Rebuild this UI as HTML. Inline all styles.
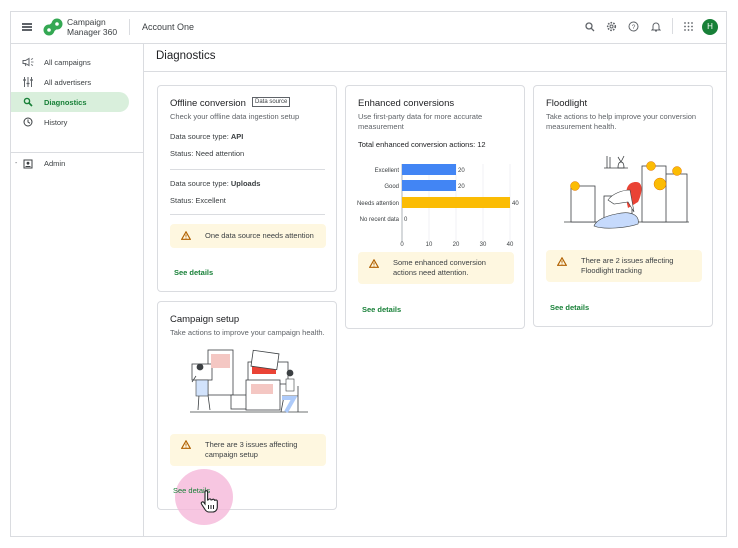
<!DOCTYPE html>
<html><head><style>
*{box-sizing:border-box;margin:0;padding:0}
body{width:738px;height:548px;background:#fff;font-family:"Liberation Sans",sans-serif;color:#3c4043;position:relative;overflow:hidden}
.a{position:absolute}
.frame{left:10px;top:11px;width:717px;height:526px;border:1px solid #dadce0}
.card{position:absolute;border:1px solid #dadce0;border-radius:4px;background:#fff}
.t{font-size:9.5px;color:#202124}
.s{font-size:7.5px;color:#5f6368;line-height:10px}
.b{font-size:7.5px;color:#3c4043}
.warn{position:absolute;background:#fef7e0;border-radius:4px;font-size:7.5px;color:#3c4043;line-height:10px}
.warn svg{position:absolute;left:11px}
.link{position:absolute;font-size:7.5px;color:#188038;font-weight:bold}
.nav{position:absolute;left:44px;font-size:7.5px;color:#3c4043}
</style></head><body>
<div class="a frame"></div>
<div class="a" style="left:11px;top:43px;width:716px;height:1px;background:#dadce0"></div>
<div class="a" style="left:22px;top:23px;width:10px;height:1.5px;background:#5f6368;box-shadow:0 3px 0 #5f6368,0 6px 0 #5f6368"></div>
<svg class="a" style="left:43px;top:17px" width="20" height="20" viewBox="0 0 20 20"><circle cx="6" cy="13" r="5.5" fill="#34a853"/><circle cx="14" cy="7" r="5.5" fill="#34a853"/><rect x="5" y="6" width="10" height="8" fill="#34a853" transform="rotate(-40 10 10)"/><circle cx="6" cy="13" r="1.8" fill="#fff"/><circle cx="14" cy="7" r="1.8" fill="#fff"/></svg>
<div class="a" style="left:67px;top:17px;font-size:8.5px;line-height:10px;color:#3c4043">Campaign<br>Manager 360</div>
<div class="a" style="left:129px;top:19px;width:1px;height:16px;background:#dadce0"></div>
<div class="a" style="left:142px;top:22px;font-size:9px;color:#3c4043">Account One</div>
<svg class="a" style="left:585px;top:22px" width="10" height="10" viewBox="0 0 10 10"><circle cx="4" cy="4" r="3" fill="none" stroke="#5f6368" stroke-width="1.3"/><path d="M6.3 6.3L9 9" stroke="#5f6368" stroke-width="1.3"/></svg>
<svg class="a" style="left:606px;top:21px" width="11" height="11" viewBox="0 0 11 11"><circle cx="5.5" cy="5.5" r="3.8" fill="none" stroke="#5f6368" stroke-width="1.6" stroke-dasharray="1.6 1.2"/><circle cx="5.5" cy="5.5" r="1.5" fill="none" stroke="#5f6368" stroke-width="1"/></svg>
<svg class="a" style="left:628px;top:21px" width="11" height="11" viewBox="0 0 11 11"><circle cx="5.5" cy="5.5" r="4.5" fill="none" stroke="#5f6368" stroke-width="1"/><text x="5.5" y="8" font-size="6.5" text-anchor="middle" fill="#5f6368" font-family="Liberation Sans">?</text></svg>
<svg class="a" style="left:651px;top:21px" width="10" height="11" viewBox="0 0 10 11"><path d="M2 8V5a3 3 0 016 0v3l1 1H1z" fill="none" stroke="#5f6368" stroke-width="1"/><path d="M4 10h2" stroke="#5f6368"/></svg>
<div class="a" style="left:672px;top:18px;width:1px;height:16px;background:#dadce0"></div>
<svg class="a" style="left:684px;top:22px" width="9" height="9" viewBox="0 0 9 9" fill="#5f6368"><circle cx="1" cy="1" r=".9"/><circle cx="4.5" cy="1" r=".9"/><circle cx="8" cy="1" r=".9"/><circle cx="1" cy="4.5" r=".9"/><circle cx="4.5" cy="4.5" r=".9"/><circle cx="8" cy="4.5" r=".9"/><circle cx="1" cy="8" r=".9"/><circle cx="4.5" cy="8" r=".9"/><circle cx="8" cy="8" r=".9"/></svg>
<div class="a" style="left:702px;top:19px;width:16px;height:16px;border-radius:50%;background:#188038;color:#fff;font-size:8px;text-align:center;line-height:16px">H</div>
<!-- sidebar -->
<div class="a" style="left:143px;top:44px;width:1px;height:493px;background:#dadce0"></div>
<div class="a" style="left:11px;top:152px;width:132px;height:1px;background:#dadce0"></div>
<div class="a" style="left:11px;top:92px;width:118px;height:20px;background:#d9efdc;border-radius:0 10px 10px 0"></div>
<svg class="a" style="left:22px;top:57px" width="12" height="10" viewBox="0 0 12 10"><path d="M1 3.5h2.5L7 1.5v7L3.5 6.5H1z" fill="none" stroke="#5f6368" stroke-width="1"/><path d="M3 6.5l.8 2.5" stroke="#5f6368"/><path d="M9 2.5l2-1M9 5h2.5M9 7.5l2 1" stroke="#5f6368" stroke-width=".8"/></svg>
<div class="nav" style="top:58px">All campaigns</div>
<svg class="a" style="left:23px;top:77px" width="10" height="10" viewBox="0 0 10 10" stroke="#5f6368" stroke-width="1"><path d="M1.5 0v10M5 0v10M8.5 0v10"/><path d="M0 3h3M3.5 6.5h3M7 3h3" stroke-width="1.2"/></svg>
<div class="nav" style="top:78px">All advertisers</div>
<svg class="a" style="left:23px;top:97px" width="10" height="10" viewBox="0 0 10 10"><circle cx="4" cy="4" r="2.6" fill="none" stroke="#188038" stroke-width="1.4"/><path d="M6 6l3 3" stroke="#188038" stroke-width="1.6"/></svg>
<div class="nav" style="top:98px;color:#188038;font-weight:bold">Diagnostics</div>
<svg class="a" style="left:23px;top:117px" width="10" height="10" viewBox="0 0 10 10"><circle cx="5" cy="5" r="4" fill="none" stroke="#3c4043" stroke-width="1"/><path d="M5 2.5V5l2 1.3" fill="none" stroke="#3c4043"/></svg>
<div class="nav" style="top:118px">History</div>
<div class="a" style="left:15px;top:160px;font-size:7px;color:#5f6368">-</div>
<svg class="a" style="left:23px;top:159px" width="10" height="10" viewBox="0 0 10 10"><rect x="1" y="1" width="8" height="8" fill="none" stroke="#3c4043"/><circle cx="5" cy="4.2" r="1.4" fill="#3c4043"/><path d="M2.5 7.5h5" stroke="#3c4043"/></svg>
<div class="nav" style="top:159px">Admin</div>
<div class="a" style="left:156px;top:50px;font-size:11.5px;color:#202124">Diagnostics</div>
<div class="a" style="left:144px;top:71px;width:583px;height:1px;background:#dadce0"></div>

<!-- card 1 -->
<div class="card" style="left:157px;top:85px;width:180px;height:207px">
  <div class="a t" style="left:12px;top:12px">Offline conversion</div>
  <div class="a" style="left:94px;top:11px;border:1px solid #5f6368;font-size:6px;padding:1px 2px;color:#3c4043">Data source</div>
  <div class="a s" style="left:12px;top:26px">Check your offline data ingestion setup</div>
  <div class="a b" style="left:12px;top:46px">Data source type: <b>API</b></div>
  <div class="a b" style="left:12px;top:63px">Status: Need attention</div>
  <div class="a" style="left:12px;top:83px;width:155px;height:1px;background:#dadce0"></div>
  <div class="a b" style="left:12px;top:93px">Data source type: <b>Uploads</b></div>
  <div class="a b" style="left:12px;top:110px">Status: Excellent</div>
  <div class="a" style="left:12px;top:128px;width:155px;height:1px;background:#dadce0"></div>
  <div class="warn" style="left:12px;top:138px;width:156px;height:24px"><svg style="top:7px" width="10" height="9" viewBox="0 0 10 9"><path d="M5 .8L9.3 8.3H.7z" fill="none" stroke="#b06000" stroke-width="1.1"/><path d="M5 3.5v2.2M5 6.6v.8" stroke="#b06000"/></svg><span class="a" style="left:35px;top:7px">One data source needs attention</span></div>
  <div class="link" style="left:16px;top:182px">See details</div>
</div>
<!-- card 2 -->
<div class="card" style="left:157px;top:301px;width:180px;height:209px">
  <div class="a t" style="left:12px;top:12px">Campaign setup</div>
  <div class="a s" style="left:12px;top:26px">Take actions to improve your campaign health.</div>
  <svg class="a" style="left:30px;top:44px" width="120" height="80" viewBox="0 0 120 80">
    <g fill="none" stroke="#3c4043" stroke-width=".8">
    <rect x="20" y="4" width="25" height="45" fill="#fff"/><rect x="43" y="49" width="30" height="14" fill="#fff"/>
    <rect x="60" y="16" width="40" height="22" fill="#fff"/><rect x="58" y="34" width="34" height="30" fill="#fff"/>
    <path d="M2 66h118"/><rect x="4" y="18" width="20" height="16" fill="#fff"/>
    <path d="M12 34l-2 30M18 34l4 30M8 30l-4 6" /><circle cx="12" cy="21" r="3" fill="#3c4043"/>
    <path d="M110 40v26M94 50h16M96 50l-3 16" /><circle cx="102" cy="27" r="3" fill="#3c4043"/>
    </g>
    <rect x="23" y="8" width="19" height="14" fill="#f4c7c3"/>
    <rect x="64" y="20" width="24" height="8" fill="#ea4335"/>
    <rect x="63" y="38" width="22" height="10" fill="#f4c7c3"/>
    <rect x="8" y="34" width="12" height="16" fill="#d2e3fc" stroke="#3c4043" stroke-width=".6"/>
    <path d="M94 52h12l-8 14" fill="none" stroke="#aecbfa" stroke-width="4"/>
    <rect x="98" y="33" width="8" height="12" fill="#fff" stroke="#3c4043" stroke-width=".6"/>
    <rect x="64" y="6" width="26" height="16" fill="#fff" stroke="#3c4043" stroke-width=".8" transform="rotate(8 77 14)"/>
  </svg>
  <div class="warn" style="left:12px;top:132px;width:156px;height:32px"><svg style="top:6px" width="10" height="9" viewBox="0 0 10 9"><path d="M5 .8L9.3 8.3H.7z" fill="none" stroke="#b06000" stroke-width="1.1"/><path d="M5 3.5v2.2M5 6.6v.8" stroke="#b06000"/></svg><span class="a" style="left:35px;top:6px">There are 3 issues affecting<br>campaign setup</span></div>
</div>
<div class="a" style="left:175px;top:469px;width:58px;height:56px;border-radius:50%;background:#f5b8da;opacity:.8"></div>
<div class="a" style="left:173px;top:486px;font-size:7.5px;color:#188038">See details</div>
<svg class="a" style="left:200px;top:490px" width="18" height="24" viewBox="0 0 18 24"><path d="M5 2a1.3 1.3 0 012.6 0v8l1-.3a1.3 1.3 0 012.5.3l1-.2a1.3 1.3 0 012.4.5l.8-.1a1.3 1.3 0 012 1.1V17c0 3-2 5-4.5 5H9c-2 0-3-1-4-2.5L1.5 14a1.4 1.4 0 012.2-1.7L5 14z" fill="#fff" stroke="#202124" stroke-width="1.1"/><path d="M8.5 15v4M11 15v4M13.5 15v4" stroke="#202124" stroke-width="1"/></svg>
<!-- card 3 -->
<div class="card" style="left:345px;top:85px;width:180px;height:244px">
  <div class="a t" style="left:12px;top:12px">Enhanced conversions</div>
  <div class="a s" style="left:12px;top:26px">Use first-party data for more accurate<br>measurement</div>
  <div class="a b" style="left:12px;top:54px;color:#202124">Total enhanced conversion actions: 12</div>
  <svg class="a" style="left:0;top:70px" width="180" height="95" viewBox="0 0 180 95" font-family="Liberation Sans" font-size="6" fill="#3c4043">
    <g stroke="#e8eaed" stroke-width=".6"><path d="M83 8v78M110 8v78M137 8v78M164 8v78"/></g>
    <path d="M56 8v78" stroke="#9aa0a6" stroke-width=".8"/>
    <rect x="56" y="8" width="54" height="11" fill="#4285f4"/>
    <rect x="56" y="24" width="54" height="11" fill="#4285f4"/>
    <rect x="56" y="41" width="108" height="11" fill="#fbbc04"/>
    <g text-anchor="end"><text x="53" y="16">Excellent</text><text x="53" y="32">Good</text><text x="53" y="49">Needs attention</text><text x="53" y="65">No recent data</text></g>
    <text x="112" y="16">20</text><text x="112" y="32">20</text><text x="166" y="49">40</text><text x="58" y="65">0</text>
    <g text-anchor="middle"><text x="56" y="90">0</text><text x="83" y="90">10</text><text x="110" y="90">20</text><text x="137" y="90">30</text><text x="164" y="90">40</text></g>
  </svg>
  <div class="warn" style="left:12px;top:166px;width:156px;height:32px"><svg style="top:7px" width="10" height="9" viewBox="0 0 10 9"><path d="M5 .8L9.3 8.3H.7z" fill="none" stroke="#b06000" stroke-width="1.1"/><path d="M5 3.5v2.2M5 6.6v.8" stroke="#b06000"/></svg><span class="a" style="left:35px;top:6px">Some enhanced conversion<br>actions need attention.</span></div>
  <div class="link" style="left:16px;top:219px">See details</div>
</div>
<!-- card 4 -->
<div class="card" style="left:533px;top:85px;width:180px;height:242px">
  <div class="a t" style="left:12px;top:12px">Floodlight</div>
  <div class="a s" style="left:12px;top:26px">Take actions to help improve your conversion<br>measurement health.</div>
  <svg class="a" style="left:20px;top:58px" width="140" height="100" viewBox="0 0 140 100">
    <g fill="none" stroke="#3c4043" stroke-width=".8">
    <path d="M10 78h125"/><rect x="17" y="42" width="24" height="36" fill="#fff"/><rect x="108" y="30" width="25" height="48" fill="#fff"/><rect x="88" y="22" width="24" height="56" fill="#fff"/>
    <rect x="50" y="52" width="28" height="26" fill="#fff"/><path d="M50 24h24M53 12v12M56 13v11"/>
    <path d="M64 24c0-4 1-6 3-6s3 2 3 6z"/><path d="M67 18l-3-5M67 18l3-6"/>
    </g>
    <path d="M82 38c-10 0-12 10-8 26l10 -6c4-8 6-20-2-20z" fill="#ea4335"/>
    <path d="M76 46c-8 0-18 4-22 10l6 4 14-2 6 10z" fill="#fff" stroke="#3c4043" stroke-width=".6"/>
    <path d="M62 70c-10 2-20 6-22 12 10 4 32 2 44 -2 2-8-6-14-22-10z" fill="#c6dafc" stroke="#3c4043" stroke-width=".6"/>
    <g fill="#fbbc04" stroke="#e37400" stroke-width=".5"><circle cx="21" cy="42" r="4.5"/><circle cx="97" cy="22" r="4.5"/><circle cx="123" cy="27" r="4.5"/><circle cx="106" cy="40" r="6"/></g>
  </svg>
  <div class="warn" style="left:12px;top:164px;width:156px;height:32px"><svg style="top:7px" width="10" height="9" viewBox="0 0 10 9"><path d="M5 .8L9.3 8.3H.7z" fill="none" stroke="#b06000" stroke-width="1.1"/><path d="M5 3.5v2.2M5 6.6v.8" stroke="#b06000"/></svg><span class="a" style="left:35px;top:6px">There are 2 issues affecting<br>Floodlight tracking</span></div>
  <div class="link" style="left:16px;top:217px">See details</div>
</div>
</body></html>
